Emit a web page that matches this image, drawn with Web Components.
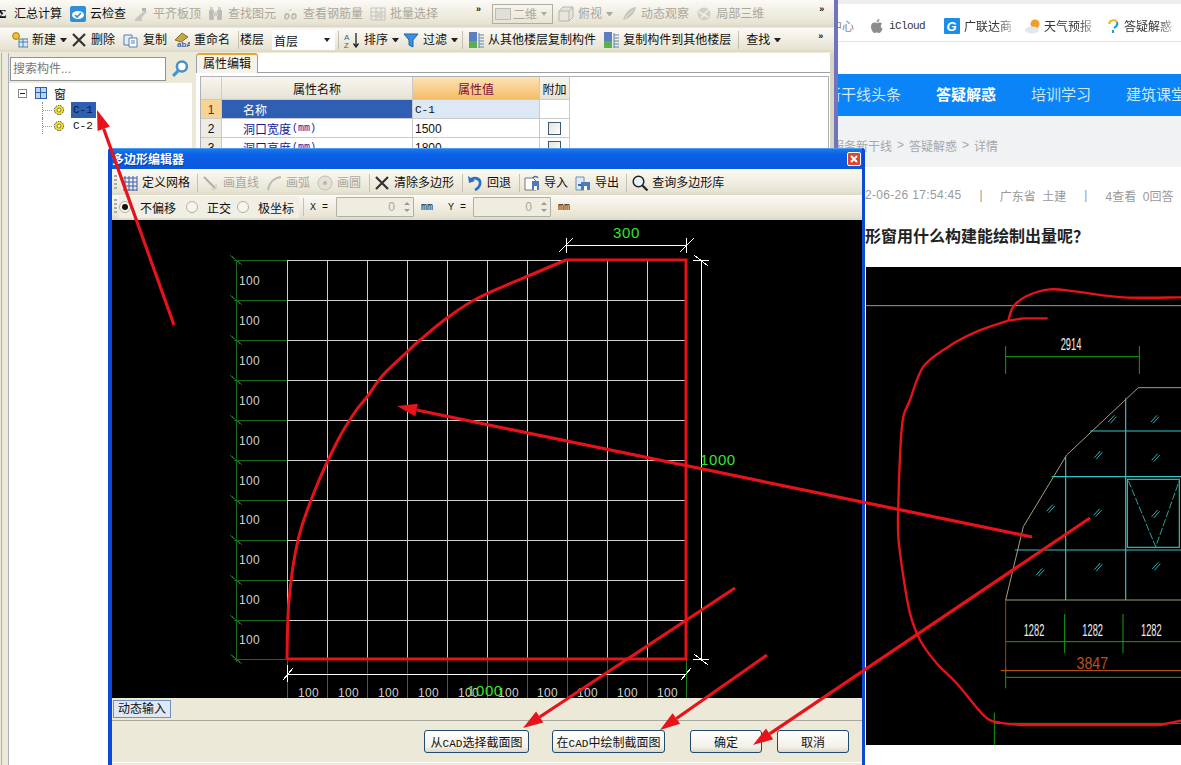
<!DOCTYPE html>
<html lang="zh">
<head>
<meta charset="utf-8">
<title>多边形编辑器</title>
<style>
  html, body { margin: 0; padding: 0; width: 1181px; height: 765px; overflow: hidden; background: #fff; }
  body { font: 12px "Liberation Sans", "Noto Sans CJK SC", sans-serif; color: #111; position: relative; }
  .desk { display: flex; width: 1181px; height: 765px; }
</style>
</head>
<body>
<div class="desk">
  <back-app></back-app>
  <web-page></web-page>
</div>
<poly-dialog></poly-dialog>
<annot-arrows></annot-arrows>

<script>
const svg = (w, h, body) => `<svg width="${w}" height="${h}" viewBox="0 0 16 16" xmlns="http://www.w3.org/2000/svg">${body}</svg>`;

// catmull-rom through the points, for the hand drawn curves
const smooth = pts => {
  let d = '';
  for (let i = 0; i < pts.length - 1; i++) {
    const p0 = pts[i - 1] || pts[i], p1 = pts[i], p2 = pts[i + 1], p3 = pts[i + 2] || p2;
    const c1 = [p1[0] + (p2[0] - p0[0]) / 6, p1[1] + (p2[1] - p0[1]) / 6];
    const c2 = [p2[0] - (p3[0] - p1[0]) / 6, p2[1] - (p3[1] - p1[1]) / 6];
    d += `C${c1[0].toFixed(1)} ${c1[1].toFixed(1)} ${c2[0].toFixed(1)} ${c2[1].toFixed(1)} ${p2[0]} ${p2[1]}`;
  }
  return d;
};

const ICONS = {
  cloud: '<rect x="0" y="0" width="16" height="16" rx="2" fill="#2f8fd8"/><ellipse cx="8" cy="9" rx="6" ry="4" fill="#fff"/><path d="M5 9l2 2 4-4" fill="none" stroke="#2f8fd8" stroke-width="1.6"/>',
  level: '<path d="M2 13l10-9 2 2-5 5v4H2z" fill="#c8c8c2"/><rect x="9" y="2" width="4" height="3" fill="#b4b4ae"/>',
  find: '<rect x="1" y="4" width="5" height="10" rx="1" fill="#bcbcb4"/><rect x="9" y="4" width="5" height="10" rx="1" fill="#bcbcb4"/><rect x="5" y="6" width="5" height="4" fill="#cfcfc8"/><rect x="2" y="1" width="3" height="3" fill="#d0d0ca"/><rect x="10" y="1" width="3" height="3" fill="#d0d0ca"/>',
  rebar: '<path d="M2 11c0-4 4-4 4-1s-4 4-4 1zM9 11c0-4 4-4 4-1s-4 4-4 1z" fill="none" stroke="#b8b8b0" stroke-width="1.6"/><path d="M6 5l3-2" stroke="#c8c8c0"/>',
  batch: '<path d="M1 2h14v12H1z" fill="none" stroke="#c4c4bc"/><path d="M1 6h14M1 10h14M6 2v12M11 2v12" stroke="#c4c4bc"/><rect x="7" y="7" width="6" height="5" fill="#d4d4cc"/>',
  box: '<path d="M1 5l4-4h10v10l-4 4H1z" fill="#e8e6dc" stroke="#b6b6ae"/><path d="M1 5h10v10M11 5l4-4" fill="none" stroke="#b6b6ae"/>',
  orbit: '<path d="M2 14C4 6 9 2 15 1c-1 6-5 11-13 13z" fill="#c6c6be"/><path d="M4 12l8-8" stroke="#e4e4dc"/>',
  cube3: '<circle cx="8" cy="8" r="6.5" fill="#d0d0c8"/><path d="M3 6l9 5M5 12l7-8" stroke="#efefe8" stroke-width="1.5"/>',
  add: '<rect x="7" y="7" width="9" height="8" fill="#dbe8f6" stroke="#4d7fae"/><path d="M7 10h9M11 7v8" stroke="#4d7fae"/><circle cx="4" cy="4" r="3.4" fill="#f2c230" stroke="#a67c10"/>',
  del: '<path d="M2 2l12 12M14 2L2 14" stroke="#333" stroke-width="2.2"/>',
  copy: '<path d="M1 3h8v10H1z" fill="#e4eef9" stroke="#567fb0"/><path d="M6 6h8v9H6z" fill="#fff" stroke="#567fb0"/><path d="M8 9h4M8 11h4" stroke="#567fb0"/>',
  rename: '<path d="M1 8l7-7 6 4-7 5z" fill="#c9a648" stroke="#86702e"/><text x="3" y="15" font-size="8" font-weight="700" font-family="Liberation Sans" fill="#3866a8">abA</text>',
  sort: '<text x="0" y="7.5" font-size="8" font-family="Liberation Sans" fill="#2d62b0">A</text><text x="0" y="15.5" font-size="8" font-family="Liberation Sans" fill="#b03030">Z</text><path d="M12 1v13M9.5 11.5L12 15l2.500-3.500" fill="none" stroke="#222" stroke-width="1.300"/>',
  filter: '<path d="M1 2h14L10 8v7l-4-2V8z" fill="#3f8fe0" stroke="#1e63ab"/>',
  fromfloor: '<rect x="1" y="0" width="8" height="9" fill="#5a7ec0"/><rect x="1" y="9" width="8" height="7" fill="#58b050"/><path d="M11 3h5M11 6h5M11 9h5M11 12h5M11 15h5" stroke="#5a86a8"/><path d="M11 1v15" stroke="#5a86a8"/>',
  grid: '<path d="M1 3h14M1 7h14M1 11h14M1 15h14M3 1v15M7 1v15M11 1v15M15 1v15" stroke="#3b5fb0"/>',
  line: '<path d="M1 2l11 11" stroke="#b0b0a8" stroke-width="2"/><path d="M13 9v5H8" fill="none" stroke="#c8c8c0"/>',
  arc: '<path d="M2 15C3 8 8 3 15 2" fill="none" stroke="#bcbcb4" stroke-width="2"/>',
  circle: '<circle cx="8" cy="8" r="7" fill="#e4e2d6" stroke="#c0c0b8"/><circle cx="8" cy="8" r="2" fill="#b8b8b0"/>',
  undo: '<path d="M3 6c3-5 11-3 10 3-.5 3-3 5-5 6" fill="none" stroke="#2d6bc4" stroke-width="2.600"/><path d="M1 1l1 7 6-2z" fill="#2d6bc4"/>',
  imp: '<path d="M1 3h8l3 3v9H1z" fill="#fff" stroke="#777"/><rect x="8" y="6" width="7" height="9" fill="#4a7cb8"/><rect x="10" y="11" width="3" height="4" fill="#fff"/><path d="M9 3c1-2 4-2 5 0" fill="none" stroke="#3d6fae" stroke-width="1.400"/>',
  exp: '<path d="M1 2h8v13H1z" fill="#dfe9f6" stroke="#6b8fb8"/><rect x="6" y="7" width="9" height="8" fill="#4a7cb8"/><rect x="9" y="11" width="3" height="4" fill="#fff"/><path d="M3 10h4" stroke="#3d6fae" stroke-width="2"/>',
  search: '<circle cx="6.500" cy="6.500" r="5.300" fill="#e8f3fb" stroke="#222" stroke-width="1.500"/><path d="M10.500 10.500l5 5" stroke="#222" stroke-width="2.200"/>'
};

class ToolBar extends HTMLElement {
  connectedCallback() {
    this.attachShadow({ mode: 'open' });
    this.shadowRoot.innerHTML = `
      <style>
        :host { display: flex; align-items: center; height: var(--bar-h, 25px); white-space: nowrap; overflow: hidden;
                background: linear-gradient(#fbfaf5, #e8e4d4 85%, #dcd8c6); flex: none; }
      </style>
      <slot></slot>`;
  }
}

class ToolBtn extends HTMLElement {
  connectedCallback() {
    this.attachShadow({ mode: 'open' });
    const icon = this.getAttribute('icon');
    const off = this.hasAttribute('off');
    this.shadowRoot.innerHTML = `
      <style>
        :host { display: inline-flex; align-items: center; gap: 4px; flex: none; font-size: 12px; color: ${off ? '#aaa79c' : '#111'}; line-height: 16px; }
        svg { display: block; flex: none; }
        .caret { width: 1px; height: 0; margin-right: 1px; border: 3px solid transparent; border-top: 4px solid ${off ? '#aaa' : '#222'}; border-bottom: 0; }
      </style>
      ${icon ? svg(16, 16, ICONS[icon]) : ''}<slot></slot>${this.hasAttribute('caret') ? '<span class="caret"></span>' : ''}`;
  }
}

class ToolSep extends HTMLElement {
  connectedCallback() {
    this.attachShadow({ mode: 'open' });
    this.shadowRoot.innerHTML = `<style>:host { display: block; width: 1px; height: 18px; background: #c4c1b2; flex: none; }</style>`;
  }
}

class MoreChevron extends HTMLElement {
  connectedCallback() {
    this.attachShadow({ mode: 'open' });
    this.shadowRoot.innerHTML = `<style>:host { display: block; width: 7px; font: 700 9px/9px "Liberation Sans", sans-serif; letter-spacing: -1px; color: #111; margin-top: -8px; flex: none; }</style>»`;
  }
}

class ComboBox extends HTMLElement {
  connectedCallback() {
    this.attachShadow({ mode: 'open' });
    const off = this.hasAttribute('off');
    this.shadowRoot.innerHTML = `
      <style>
        :host { display: flex; align-items: center; box-sizing: border-box; height: 20px; flex: none;
                background: ${off ? 'transparent' : '#fff'}; border: ${off ? '1px solid #b0aea2' : '0'}; color: ${off ? '#aaa79c' : '#111'}; padding-left: 2px; }
        .txt { flex: 1; display: flex; align-items: center; gap: 2px; }
        .swatch { width: 14px; height: 10px; background: #e2e0d4; border: 1px solid #bbb; display: ${off ? 'block' : 'none'}; }
        .caret { width: 0; height: 0; margin-right: 5px; border: 3px solid transparent; border-top: 4px solid ${off ? '#aaa' : '#222'}; border-bottom: 0; }
      </style>
      <span class="txt"><span class="swatch"></span><slot></slot></span><span class="caret"></span>`;
  }
}

class PropTable extends HTMLElement {
  connectedCallback() {
    this.attachShadow({ mode: 'open' });
    const rows = [
      ['1', '名称', 'C-1', false, true],
      ['2', '洞口宽度<small>(mm)</small>', '1500', true, false],
      ['3', '洞口高度<small>(mm)</small>', '1800', true, false]
    ];
    this.shadowRoot.innerHTML = `
      <style>
        :host { display: block; margin: 3px 1px 0 4px; border: 1px solid #aeb2b6; height: 100%; background: #fff; }
        .grid { display: grid; grid-template-columns: 21px 191px 127px 30px; grid-auto-rows: 19px; grid-template-rows: 23px 19px; width: 369px; }
        .grid > div { box-sizing: border-box; border-right: 1px solid #c8cacb; border-bottom: 1px solid #c8cacb; display: flex; align-items: center; }
        .hd { justify-content: center; background: linear-gradient(#f8f6ee, #e6e3d6); }
        .hd.val { background: linear-gradient(#fde3b4, #f4bd68); color: #7a0f3a; }
        .no { justify-content: center; background: #eeece2; padding-top: 1px; }
        .no.on { background: #f8d494; color: #7a1a1a; }
        .name { padding: 1px 0 0 21px; color: #16169a; background: #fff; }
        .name.on { background: #2f5fb3; color: #fff; }
        small { font: 10px "Liberation Mono", monospace; margin-left: 1px; }
        .v { padding: 1px 0 0 2px; background: #fff; }
        .v.on { background: #dde8f5; font: 11px "Liberation Mono", monospace; }
        .chk { justify-content: center; }
        .chk i { display: block; box-sizing: border-box; width: 13px; height: 13px; border: 1px solid #3d5a72; background: linear-gradient(135deg, #e4e3dc, #fff); }
      </style>
      <div class="grid">
        <div class="hd"></div><div class="hd">属性名称</div><div class="hd val">属性值</div><div class="hd">附加</div>
        ${rows.map(r => `<div class="no ${r[4] ? 'on' : ''}">${r[0]}</div><div class="name ${r[4] ? 'on' : ''}">${r[1]}</div><div class="v ${r[4] ? 'on' : ''}">${r[2]}</div><div class="chk">${r[3] ? '<i></i>' : ''}</div>`).join('')}
      </div>`;
  }
}

class CompTree extends HTMLElement {
  connectedCallback() {
    this.attachShadow({ mode: 'open' });
    const gear = '<svg class="gear" width="12" height="12" viewBox="0 0 12 12"><circle cx="6" cy="6" r="4.600" fill="#f4e020" stroke="#444" stroke-dasharray="1.500 1"/><circle cx="6" cy="6" r="2" fill="#fff7a0" stroke="#555" stroke-width=".7"/></svg>';
    this.shadowRoot.innerHTML = `
      <style>
        :host { display: flex; flex-direction: column; flex: 1; padding: 2px 0 0 9px; font-size: 12px; background: #fff; }
        .root { display: flex; align-items: center; height: 16px; }
        .minus { box-sizing: border-box; width: 9px; height: 9px; border: 1px solid #888; position: relative; background: #fff; }
        .minus::after { content: ""; position: absolute; left: 1px; right: 1px; top: 3px; height: 1px; background: #222; }
        .win { box-sizing: border-box; width: 12px; height: 12px; margin-left: 8px; border: 1px solid #2f5fa8; background: linear-gradient(90deg, transparent 4px, #2f5fa8 4px, #2f5fa8 5px, transparent 5px), linear-gradient(transparent 4px, #2f5fa8 4px, #2f5fa8 5px, transparent 5px), #bcd6f0; }
        .rootlbl { margin-left: 7px; }
        .leaf { display: flex; align-items: center; height: 16px; margin-left: 24px; }
        .dots { width: 11px; height: 16px; box-sizing: border-box; border-left: 1px dotted #888; background: linear-gradient(90deg, #999 50%, transparent 50%) 0 8px / 2px 1px repeat-x; }
        .gear { flex: none; }
        .lbl { margin-left: 6px; padding: 0 2px; height: 16px; font: 11px/16px "Liberation Mono", monospace; width: 21px; }
        .lbl.on { background: #2f5fb3; color: #0c1a38; }
      </style>
      <div class="root"><span class="minus"></span><span class="win"></span><span class="rootlbl">窗</span></div>
      <div class="leaf" style="margin-top:1px"><span class="dots"></span>${gear}<span class="lbl on">C-1</span></div>
      <div class="leaf"><span class="dots"></span>${gear}<span class="lbl">C-2</span></div>`;
  }
}

class BackApp extends HTMLElement {
  connectedCallback() {
    this.attachShadow({ mode: 'open' });
    this.shadowRoot.innerHTML = `
      <style>
        :host { display: flex; flex-direction: column; width: 838px; height: 765px; box-sizing: border-box; flex: none; border-right: 4px solid #6f74bd; background: #ece9d8; overflow: hidden; }
        tool-bar.r1 { --bar-h: 27px; }
        tool-bar.r2 { --bar-h: 24px; margin: 1px 0; }
        .sigma { width: 14px; font: 700 13px "Liberation Serif", serif; flex: none; margin-left: -2px; padding-right: 2px; box-sizing: content-box; }
        .body { display: flex; flex: 1; min-height: 0; }
        .side { width: 183px; flex: none; display: flex; flex-direction: column; box-sizing: border-box; }
        .leftstrip { width: 8px; flex: none; box-sizing: border-box; border-left: 1px solid #b0b0a8; margin-left: 1px; border-right: 1px solid #aab0bc; }
        .search { display: flex; align-items: center; gap: 4px; height: 30px; padding: 2px 0 0 1px; background: #ece9d8; box-sizing: border-box; }
        .search .inp { box-sizing: border-box; width: 156px; height: 24px; border: 1px solid #8f9499; background: #fff; color: #777; line-height: 22px; padding-left: 2px; }
        .treewrap { flex: 1; display: flex; background: #fff; min-height: 0; }
        .main { flex: 1; display: flex; flex-direction: column; min-width: 0; margin-left: 4px; background: #fff; border-right: 4px solid #d8d5c6; }
        .tabs { height: 20px; display: flex; border-bottom: 1px solid #9ca0a4; box-sizing: border-box; flex: none; background: #fff; }
        .tab { box-sizing: border-box; width: 62px; height: 20px; background: #f6f4ea; border: 1px solid #9ca0a4; border-top: 2px solid #e8a638; border-bottom: 0; border-radius: 3px 3px 0 0; line-height: 18px; text-align: center; }
        .sr { width: 20px; height: 20px; display: block; }
      </style>
      <tool-bar class="r1">
        <span class="sigma">Σ</span>
        <tool-btn>汇总计算</tool-btn>
        <tool-btn icon="cloud" style="margin-left:8px">云检查</tool-btn>
        <tool-btn icon="level" off style="margin-left:7px">平齐板顶</tool-btn>
        <tool-btn icon="find" off style="margin-left:7px">查找图元</tool-btn>
        <tool-btn icon="rebar" off style="margin-left:7px">查看钢筋量</tool-btn>
        <tool-btn icon="batch" off style="margin-left:7px">批量选择</tool-btn>
        <more-chevron style="margin-left:38px"></more-chevron>
        <combo-box off style="margin-left:9px;width:61px">二维</combo-box>
        <tool-btn icon="box" off caret style="margin-left:5px">俯视</tool-btn>
        <tool-btn icon="orbit" off style="margin-left:7px">动态观察</tool-btn>
        <tool-btn icon="cube3" off style="margin-left:7px">局部三维</tool-btn>
        <more-chevron style="margin-left:55px"></more-chevron>
      </tool-bar>
      <tool-bar class="r2">
        <tool-btn icon="add" caret style="margin-left:12px">新建</tool-btn>
        <tool-btn icon="del" style="margin-left:3px">删除</tool-btn>
        <tool-btn icon="copy" style="margin-left:8px">复制</tool-btn>
        <tool-btn icon="rename" style="margin-left:7px">重命名</tool-btn>
        <tool-sep style="margin-left:8px"></tool-sep>
        <tool-btn style="margin-left:1px">楼层</tool-btn>
        <combo-box style="margin-left:8px;width:63px">首层</combo-box>
        <tool-sep style="margin-left:3px"></tool-sep>
        <tool-btn icon="sort" caret style="margin-left:5px">排序</tool-btn>
        <tool-btn icon="filter" caret style="margin-left:3px">过滤</tool-btn>
        <tool-sep style="margin-left:3px"></tool-sep>
        <tool-btn icon="fromfloor" style="margin-left:5px">从其他楼层复制构件</tool-btn>
        <tool-btn icon="fromfloor" style="margin-left:7px">复制构件到其他楼层</tool-btn>
        <tool-sep style="margin-left:7px"></tool-sep>
        <tool-btn caret style="margin-left:7px">查找</tool-btn>
        <more-chevron style="margin-left:36px"></more-chevron>
      </tool-bar>
      <div class="body">
        <div class="leftstrip"></div>
        <div class="side">
          <div class="search"><div class="inp">搜索构件...</div>
            <svg class="sr" viewBox="0 0 16 16"><circle cx="9.500" cy="6" r="4" fill="#fff" stroke="#4a90c8" stroke-width="2"/><path d="M6.500 9.500l-4 4" stroke="#4a90c8" stroke-width="2.400"/></svg>
          </div>
          <div class="treewrap"><comp-tree></comp-tree></div>
        </div>
        <div class="main">
          <div class="tabs"><div class="tab">属性编辑</div></div>
          <prop-table></prop-table>
        </div>
      </div>`;
  }
}

class WebPage extends HTMLElement {
  connectedCallback() {
    this.attachShadow({ mode: 'open' });
    this.shadowRoot.innerHTML = `
      <style>
        :host { display: flex; flex-direction: column; flex: 1; min-width: 0; height: 765px; overflow: hidden; background: #fff; font-family: "Liberation Sans", "Noto Sans CJK SC", sans-serif; }
        .top { height: 4px; background: #eee; flex: none; }
        .marks { height: 38px; flex: none; display: flex; align-items: center; white-space: nowrap; border-bottom: 1px solid #e4e4e4; box-sizing: border-box; padding-top: 6px; color: #333; font-size: 12px; }
        .marks svg { display: block; flex: none; }
        .fade { width: 48px; overflow: hidden; -webkit-mask-image: linear-gradient(90deg, #000 70%, rgba(0,0,0,.35)); mask-image: linear-gradient(90deg, #000 70%, rgba(0,0,0,.35)); }
        .gap { height: 32px; flex: none; }
        nav { height: 42px; flex: none; box-sizing: border-box; padding-bottom: 4px; background: #0a84f6; display: flex; align-items: center; white-space: nowrap; font-size: 15px; color: #cfe6ff; }
        nav b { color: #fff; }
        .crumb { height: 51px; flex: none; background: #f0f2f4; color: #a5a7aa; font-size: 12px; display: flex; align-items: center; padding-top: 7px; box-sizing: border-box; white-space: nowrap; gap: 5px; }
        .info { height: 100px; flex: none; box-sizing: border-box; padding-left: 27px; }
        .meta { height: 56px; margin-bottom: 1px; display: flex; align-items: center; color: #9a9a9a; font-size: 12px; white-space: nowrap; }
        h1 { margin: 0; font-size: 16px; line-height: 22px; color: #222; font-weight: 700; white-space: nowrap; }
        h1 span { font-family: "Noto Sans CJK TC", sans-serif; }
        cad-photo { flex: none; }
      </style>
      <div class="top"></div>
      <div class="marks">
        <span style="color:#888;margin-left:-8px">中心</span>
        <svg style="margin-left:17px" width="12" height="14" viewBox="0 0 12 14"><path d="M8.500 0C8.500 2 7 3.400 5.500 3.200 5.500 1.500 7 .2 8.500 0zM11 5c-1.800 1-1.600 3.800.7 4.600C11 11.700 9.600 14 8.300 14c-1 0-1.300-.6-2.500-.6S4.600 14 3.700 14C2 14 0 10.600 0 7.800 0 5 1.800 3.600 3.500 3.600c1.100 0 1.900.7 2.600.7s1.200-.7 2.700-.7c.9 0 1.700.4 2.200 1.400z" fill="#8d8d8d"/></svg>
        <span style="margin-left:6px;font:11px 'Liberation Mono',monospace;letter-spacing:-.6px">iCloud</span>
        <svg style="margin-left:19px" width="16" height="16" viewBox="0 0 16 16"><rect width="16" height="16" rx="1" fill="#1a8fe8"/><text x="2.500" y="13" font-size="13" font-weight="700" font-style="italic" font-family="Liberation Sans" fill="#fff">G</text></svg>
        <span style="margin-left:4px" class="fade">广联达商</span>
        <svg style="margin-left:13px" width="16" height="16" viewBox="0 0 16 16"><circle cx="10" cy="6" r="4.500" fill="#f59a2e"/><ellipse cx="7" cy="12" rx="7" ry="3.500" fill="#dfe8ee"/></svg>
        <span style="margin-left:3px" class="fade">天气预报</span>
        <svg style="margin-left:15px" width="12" height="16" viewBox="0 0 12 16"><path d="M2 6a4.500 4.500 0 0 1 8-2" fill="none" stroke="#f2b120" stroke-width="2"/><path d="M10 4c1 3-1 5-3 6" fill="none" stroke="#1f9ad6" stroke-width="2"/><path d="M6 12v3" stroke="#1f9ad6" stroke-width="2"/></svg>
        <span style="margin-left:5px" class="fade">答疑解惑</span>
      </div>
      <div class="gap"></div>
      <nav>
        <span style="margin-left:-12px">新干线头条</span>
        <b style="margin-left:35px">答疑解惑</b>
        <span style="margin-left:35px">培训学习</span>
        <span style="margin-left:35px">建筑课堂</span>
      </nav>
      <div class="crumb">
        <span style="margin-left:-6px">服务新干线</span><span>&gt;</span><span>答疑解惑</span><span>&gt;</span><span>详情</span>
      </div>
      <div class="info">
        <div class="meta">
          <span style="letter-spacing:.32px">2-06-26 17:54:45</span>
          <span style="margin-left:18px">|</span>
          <span style="margin-left:17px">广东省&nbsp;&nbsp;土建</span>
          <span style="margin-left:18px">|</span>
          <span style="margin-left:18px">4查看&nbsp;&nbsp;0回答</span>
        </div>
        <h1>形窗用什么构建能绘制出量呢<span>？</span></h1>
      </div>
      <cad-photo></cad-photo>`;
  }
}

class CadPhoto extends HTMLElement {
  connectedCallback() {
    this.attachShadow({ mode: 'open' });
    const hatch = [[757,448],[885,448],[715,555],[887,563],[572,716],[713,728],[887,732],[541,907],[715,891],[889,889]]
      .map(([x, y]) => `<path d="M${x-12} ${y+8}L${x+6} ${y-12}M${x-6} ${y+12}L${x+12} ${y-8}" stroke="#2fb5b5" stroke-width="3"/>`).join('');
    const label = (x, y, t, w, c) => `<text x="${x}" y="${y}" text-anchor="middle" textLength="${w}" lengthAdjust="spacingAndGlyphs" font-size="48" font-family="Liberation Sans" fill="${c}">${t}</text>`;
    const loop = smooth([[445,152],[350,185],[265,230],[190,290],[150,390],[130,440],[122,520],[115,700],[115,800],[130,920],[150,1030],[180,1110],[230,1180],[290,1240],[375,1340],[420,1358],[480,1365]]);
    const branch = smooth([[445,152],[460,110],[500,78],[570,58],[650,65],[790,82],[963,82]]);
    this.shadowRoot.innerHTML = `
      <style>
        :host { display: block; height: 478px; margin-left: 28px; background: #000; overflow: hidden; }
        svg { display: block; }
      </style>
      <svg width="315" height="478" viewBox="18 -9 945 1434">
        <path d="M18 107H963" stroke="#9a9a9a" stroke-width="3"/>
        <g stroke="#14a014" stroke-width="3" fill="none">
          <path d="M437 228V312M838 228V312M437 260H838"/>
          <path d="M437 1115H963M614 1032V1150M789 1032V1150"/>
          <path d="M437 1222H963M437 1190V1255M403 1328V1440M403 1360H963"/>
        </g>
        <path d="M437 990L490 770 620 555 835 353H963M437 990H963" fill="none" stroke="#a89c7c" stroke-width="3"/>
        <path d="M437 990V1210" stroke="#8a4a24" stroke-width="3"/>
        <path d="M422 1202H963" stroke="#d2601c" stroke-width="3"/>
        <g stroke="#35c2c2" stroke-width="3.500" fill="none">
          <path d="M797 385V990M617 560V990M690 483H963M575 620H963M465 840H963"/>
          <rect x="802" y="628" width="156" height="204"/>
          <path d="M805 632L887 830 958 632" stroke-dasharray="22 6" stroke-width="2.500"/>
        </g>
        ${hatch}
        ${label(633, 240, '2914', 62, '#eee')}
        ${label(522, 1097, '1282', 62, '#eee')}
        ${label(698, 1097, '1282', 62, '#eee')}
        ${label(874, 1097, '1282', 62, '#eee')}
        ${label(697, 1197, '3847', 95, '#b8541c')}
        <path d="M560 145H490L445 152${loop}H900L963 1352M445 152${branch}" fill="none" stroke="#e6141a" stroke-width="7" stroke-linejoin="round" stroke-linecap="round"/>
      </svg>`;
  }
}

class CadCanvas extends HTMLElement {
  connectedCallback() {
    this.attachShadow({ mode: 'open' });
    const xs = [287,327,367,407,447,487,527,567,607,647,686];
    const ys = [260,300,340,380,420,460,500,540,580,620,659];
    const grid = ys.map(y => `M287 ${y}H686`).join('') + xs.map(x => `M${x} 260V659`).join('');
    const greenH = ys.map(y => `M234 ${y}H287M230 ${y-5}L242 ${y+5}`).join('');
    const greenV = xs.map(x => `M${x} 659V698`).join('');
    const leftLabels = [285,325,365,405,445,485,524,564,604,644].map(y => `<text x="239" y="${y}">100</text>`).join('');
    const botLabels = [298,338,378,418,458,498,537,577,617,657].map(x => `<text x="${x}" y="697">100</text>`).join('');
    const arc = smooth([[566,260],[540,271],[480,297],[447,318],[420,340],[407,352],[383,375],[367,397],[355,412],[338,440],[315,490],[298,540],[289,600],[287,659]]);
    this.shadowRoot.innerHTML = `
      <style>
        :host { display: block; height: 478px; background: #000; flex: none; overflow: hidden; }
        svg { display: block; }
        .lbl text { font: 12px "Liberation Sans", sans-serif; fill: #d0d0d0; letter-spacing: .3px; }
        .big text { font: 15px "Liberation Sans", sans-serif; fill: #2fe62f; letter-spacing: .6px; }
      </style>
      <svg width="750" height="478" viewBox="112 220 750 478">
        <path d="${greenV}" stroke="#1c7a1c" fill="none" shape-rendering="crispEdges"/>
        <path d="${greenH}M236 260V662" stroke="#1b6a1b" fill="none" shape-rendering="crispEdges"/>
        <path d="${grid}" stroke="#cfcfcf" fill="none" shape-rendering="crispEdges"/>
        <g stroke="#fff" fill="none" shape-rendering="crispEdges">
          <path d="M566 238V253M686 238V253M566 245H687M559 252L573 238M680 252L694 238"/>
          <path d="M701 260V659M693 260H709M694 255L708 266M693 659H709M694 654L708 665"/>
          <path d="M287 674H686M287 665V682M283 680L293 668M681 680L691 668"/>
        </g>
        <path d="M287 659H686V260H566${arc}" fill="none" stroke="#e6121a" stroke-width="3"/>
        <g class="lbl">${leftLabels}${botLabels}</g>
        <g class="big"><text x="613" y="238">300</text><text x="700" y="465">1000</text><text x="467" y="696">1000</text></g>
      </svg>`;
  }
}

class DlgButton extends HTMLElement {
  connectedCallback() {
    this.attachShadow({ mode: 'open' });
    this.shadowRoot.innerHTML = `
      <style>
        :host { display: flex; align-items: center; justify-content: center; box-sizing: border-box; height: 23px; flex: none;
                border: 1px solid #1f4a6e; border-radius: 3px; background: linear-gradient(#fff, #f2f0e8 75%, #dcd8c8); font-size: 12px; color: #111; white-space: nowrap; }
      </style><span><slot></slot></span>`;
  }
}

class RadioOpt extends HTMLElement {
  connectedCallback() {
    this.attachShadow({ mode: 'open' });
    const on = this.hasAttribute('on');
    this.shadowRoot.innerHTML = `
      <style>
        :host { display: inline-flex; align-items: center; gap: 9px; flex: none; }
        i { display: flex; align-items: center; justify-content: center; box-sizing: border-box; width: 12px; height: 12px; border-radius: 50%; border: 1px solid #b4b2a4; background: #f6f5ee; }
        b { display: ${on ? 'block' : 'none'}; width: 6px; height: 6px; border-radius: 50%; background: #111; }
      </style><i><b></b></i><slot></slot>`;
  }
}

class SpinInput extends HTMLElement {
  connectedCallback() {
    this.attachShadow({ mode: 'open' });
    this.shadowRoot.innerHTML = `
      <style>
        :host { display: flex; align-items: center; justify-content: flex-end; box-sizing: border-box; width: 78px; height: 20px; flex: none; border: 1px solid #b2b0a4; border-radius: 1px; background: #efece0; color: #aaa79c; }
        span { margin-right: 5px; }
        u { display: flex; flex-direction: column; gap: 4px; width: 13px; align-items: center; }
        u i { width: 0; height: 0; border: 3px solid transparent; }
        u i:first-child { border-bottom: 3px solid #999; border-top: 0; }
        u i:last-child { border-top: 3px solid #999; border-bottom: 0; }
      </style><span><slot></slot></span><u><i></i><i></i></u>`;
  }
}

class PolyDialog extends HTMLElement {
  connectedCallback() {
    this.attachShadow({ mode: 'open' });
    this.shadowRoot.innerHTML = `
      <style>
        :host { position: absolute; left: 108px; top: 148px; width: 757px; height: 617px; box-sizing: border-box; display: flex; flex-direction: column; background: #0b49d6; border: solid #0b49d6; border-width: 0 3px 0 4px; border-radius: 3px 3px 0 0; overflow: hidden; font-size: 12px; color: #111; }
        .title { height: 21px; flex: none; display: flex; align-items: center; justify-content: space-between; background: linear-gradient(#1a7bea, #0a5fe6 30%, #0a58dc); color: #fff; font-weight: 700; font-size: 12px; margin: 0 -3px 0 -4px; padding: 0 4px 1px 4px; border-top: 1px solid #4d9af0; box-sizing: border-box; text-shadow: 1px 1px 0 #0a3da8; }
        .close { width: 14px; height: 14px; box-sizing: border-box; background: #d9472f; border: 1px solid #fff; border-radius: 2px; display: block; }
        .close svg { display: block; }
        .tb1 { --bar-h: 25px; padding-top: 1px; }
        .tb2 { --bar-h: 24px; padding-bottom: 1px; }
        .grip { width: 3px; height: 16px; flex: none; background: repeating-linear-gradient(#aaa 0 2px, transparent 2px 4px); }
        .mono { font: 10px "Liberation Mono", monospace; flex: none; }
        .radios { display: flex; align-items: center; height: 22px; background: #f1efe4; width: 180px; box-sizing: border-box; margin-left: 2px; flex: none; }
        .status { height: 22px; flex: none; background: #ece9d8; display: flex; align-items: center; padding-left: 1px; border-bottom: 1px solid #a8a89c; box-sizing: content-box; }
        .dyn { box-sizing: border-box; width: 58px; height: 18px; line-height: 16px; text-align: center; background: #dfe8f5; border: 1px solid #6f8fc0; }
        .foot { flex: 1; background: #ece9d8; position: relative; display: flex; flex-direction: column; }
        .btns { display: flex; height: 41px; box-sizing: border-box; padding: 9px 0 0 312px; }
        .rule { height: 1px; background: #fff; }
        .cad { font: 11px "Liberation Mono", monospace; }
      </style>
      <div class="title"><span>多边形编辑器</span>
        <span class="close"><svg width="12" height="12" viewBox="0 0 12 12"><path d="M3 3l6 6M9 3l-6 6" stroke="#fff" stroke-width="2"/></svg></span>
      </div>
      <tool-bar class="tb1">
        <span class="grip" style="margin-left:2px"></span>
        <tool-btn icon="grid" style="margin-left:5px">定义网格</tool-btn>
        <tool-sep style="margin-left:7px"></tool-sep>
        <tool-btn icon="line" off style="margin-left:5px">画直线</tool-btn>
        <tool-btn icon="arc" off style="margin-left:7px">画弧</tool-btn>
        <tool-btn icon="circle" off style="margin-left:7px">画圆</tool-btn>
        <tool-sep style="margin-left:8px"></tool-sep>
        <tool-btn icon="del" style="margin-left:4px">清除多边形</tool-btn>
        <tool-sep style="margin-left:8px"></tool-sep>
        <tool-btn icon="undo" style="margin-left:4px">回退</tool-btn>
        <tool-sep style="margin-left:8px"></tool-sep>
        <tool-btn icon="imp" style="margin-left:4px">导入</tool-btn>
        <tool-btn icon="exp" style="margin-left:7px">导出</tool-btn>
        <tool-sep style="margin-left:7px"></tool-sep>
        <tool-btn icon="search" style="margin-left:5px">查询多边形库</tool-btn>
      </tool-bar>
      <tool-bar class="tb2">
        <span class="grip" style="margin-left:2px"></span>
        <div class="radios">
          <radio-opt on>不偏移</radio-opt>
          <radio-opt style="margin-left:10px">正交</radio-opt>
          <radio-opt style="margin-left:6px">极坐标</radio-opt>
        </div>
        <tool-sep style="margin-left:4px"></tool-sep>
        <span class="mono" style="margin-left:6px">X =</span>
        <spin-input style="margin-left:8px">0</spin-input>
        <span class="mono" style="margin-left:7px">mm</span>
        <span class="mono" style="margin-left:15px">Y =</span>
        <spin-input style="margin-left:7px">0</spin-input>
        <span class="mono" style="margin-left:7px">mm</span>
      </tool-bar>
      <cad-canvas></cad-canvas>
      <div class="status"><div class="dyn">动态输入</div></div>
      <div class="foot">
        <div class="btns">
          <dlg-button style="width:105px">从<span class="cad">CAD</span>选择截面图</dlg-button>
          <dlg-button style="width:113px;margin-left:23px">在<span class="cad">CAD</span>中绘制截面图</dlg-button>
          <dlg-button style="width:72px;margin-left:25px">确定</dlg-button>
          <dlg-button style="width:72px;margin-left:15px">取消</dlg-button>
        </div>
        <div class="rule"></div>
      </div>`;
  }
}

class AnnotArrows extends HTMLElement {
  connectedCallback() {
    this.attachShadow({ mode: 'open' });
    const arrows = [
      [174, 325, 97, 110],
      [1032, 537, 397, 406],
      [735, 588, 523, 728],
      [767, 655, 660, 730],
      [1090, 518, 753, 745]
    ];
    const draw = ([x1, y1, x2, y2]) => {
      const len = Math.hypot(x2 - x1, y2 - y1);
      const ux = (x2 - x1) / len, uy = (y2 - y1) / len;
      const bx = x2 - ux * 20, by = y2 - uy * 20;
      const a = `${(bx - uy * 6.5).toFixed(1)} ${(by + ux * 6.5).toFixed(1)}`;
      const b = `${(bx + uy * 6.5).toFixed(1)} ${(by - ux * 6.5).toFixed(1)}`;
      return `<path d="M${x1} ${y1}L${bx.toFixed(1)} ${by.toFixed(1)}" stroke="#e8121a" stroke-width="3.200"/><polygon points="${x2} ${y2} ${a} ${b}" fill="#e8121a"/>`;
    };
    this.shadowRoot.innerHTML = `
      <style>:host { position: absolute; left: 0; top: 0; width: 1181px; height: 765px; pointer-events: none; display: block; } svg { display: block; }</style>
      <svg width="1181" height="765">${arrows.map(draw).join('')}</svg>`;
  }
}

customElements.define('tool-bar', ToolBar);
customElements.define('tool-btn', ToolBtn);
customElements.define('tool-sep', ToolSep);
customElements.define('more-chevron', MoreChevron);
customElements.define('combo-box', ComboBox);
customElements.define('prop-table', PropTable);
customElements.define('comp-tree', CompTree);
customElements.define('back-app', BackApp);
customElements.define('cad-photo', CadPhoto);
customElements.define('web-page', WebPage);
customElements.define('cad-canvas', CadCanvas);
customElements.define('dlg-button', DlgButton);
customElements.define('radio-opt', RadioOpt);
customElements.define('spin-input', SpinInput);
customElements.define('poly-dialog', PolyDialog);
customElements.define('annot-arrows', AnnotArrows);
</script>
</body>
</html>
